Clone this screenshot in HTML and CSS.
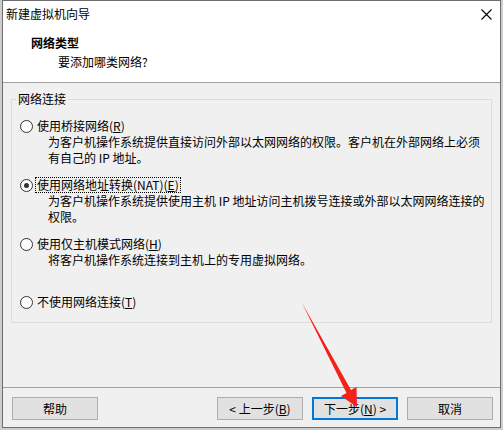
FILE: index.html
```html
<!DOCTYPE html>
<html lang="zh-CN">
<head>
<meta charset="utf-8">
<title>新建虚拟机向导</title>
<link rel="stylesheet" href="styles.css">
</head>
<body>
<div class="window">
  <div class="header">
    <div class="titlebar">
      <span class="title">新建虚拟机向导</span>
      <svg class="close" width="11" height="11" viewBox="0 0 11 11"><path d="M0.5 0.5 L10.5 10.5 M10.5 0.5 L0.5 10.5" stroke="#000" stroke-width="1.1" fill="none"/></svg>
    </div>
    <div class="heading">网络类型</div>
    <div class="subheading">要添加哪类网络?</div>
  </div>
  <div class="body">
    <fieldset class="group">
      <legend class="legend">网络连接</legend>
      <div class="options">
        <div class="option">
          <div class="radio-row"><span class="radio"></span><span class="label">使用桥接网络(<u>R</u>)</span></div>
          <div class="desc">为客户机操作系统提供直接访问外部以太网网络的权限。客户机在外部网络上必须<br>有自己的 IP 地址。</div>
        </div>
        <div class="option">
          <div class="radio-row"><span class="radio checked"></span><span class="label focus">使用网络地址转换(NAT)(<u>E</u>)</span></div>
          <div class="desc">为客户机操作系统提供使用主机 IP 地址访问主机拨号连接或外部以太网网络连接的<br>权限。</div>
        </div>
        <div class="option">
          <div class="radio-row"><span class="radio"></span><span class="label">使用仅主机模式网络(<u>H</u>)</span></div>
          <div class="desc">将客户机操作系统连接到主机上的专用虚拟网络。</div>
        </div>
        <div class="option last">
          <div class="radio-row"><span class="radio"></span><span class="label">不使用网络连接(<u>T</u>)</span></div>
        </div>
      </div>
    </fieldset>
    <div class="footer">
      <button class="btn">帮助</button>
      <div class="spacer"></div>
      <button class="btn">&lt; 上一步(<u>B</u>)</button>
      <button class="btn default">下一步(<u>N</u>) &gt;</button>
      <button class="btn">取消</button>
    </div>
  </div>
</div>
<svg class="arrow" width="503" height="430" viewBox="0 0 503 430">
  <polygon points="302,303 351,390 356.5,387 357,407 341,396 346.5,393" fill="#f3211a"/>
</svg>
</body>
</html>
```
FILE: styles.css
```css
html, body {
  margin: 0;
  padding: 0;
}
body {
  width: 503px;
  height: 430px;
  background: #cdcdcd;
  font-family: "Noto Sans CJK SC", "Noto Sans", sans-serif;
  font-size: 12px;
  color: #000;
  overflow: hidden;
  position: relative;
}
.window {
  margin-left: 2px;
  width: 499px;
  height: 428px;
  box-sizing: border-box;
  border: 1px solid #6e6e6e;
  background: #f0f0f0;
  display: flex;
  flex-direction: column;
}
.header {
  background: #fff;
  height: 81px;
  border-bottom: 1px solid #a0a0a0;
  box-sizing: content-box;
}
.titlebar {
  height: 26px;
  display: flex;
  align-items: center;
  justify-content: space-between;
  padding-left: 3px;
  padding-right: 8px;
}
.title {
  line-height: 16px;
}
.close {
  display: block;
  margin-top: 1px;
}
.heading {
  font-weight: bold;
  line-height: 16px;
  margin-top: 8px;
  padding-left: 28px;
}
.subheading {
  line-height: 16px;
  margin-top: 3px;
  padding-left: 55px;
}
.body {
  flex: 1;
  display: flex;
  flex-direction: column;
}
.group {
  margin: 8px 8px 0 8px;
  padding: 0;
  border: 1px solid #dcdcdc;
  min-width: 0;
}
.legend {
  margin-left: 4px;
  padding: 0 2px;
  line-height: 16px;
}
.options {
  padding: 11px 0 12px 8px;
}
.option {
  margin-bottom: 11px;
}
.option.last {
  margin-top: 26px;
  margin-bottom: 0;
}
.radio-row {
  display: flex;
  align-items: center;
  height: 16px;
}
.radio {
  width: 13px;
  height: 13px;
  box-sizing: border-box;
  border: 1px solid #333;
  border-radius: 50%;
  background: #fff;
  display: flex;
  align-items: center;
  justify-content: center;
  flex: none;
}
.radio.checked::after {
  content: "";
  width: 5px;
  height: 5px;
  border-radius: 50%;
  background: #333;
}
.label {
  margin-left: 2px;
  padding: 0 1px;
  line-height: 14px;
  border: 1px solid transparent;
}
.label.focus {
  border: 1px dotted #000;
}
.desc {
  padding-left: 28px;
  line-height: 16px;
}
.footer {
  margin-top: auto;
  border-top: 1px solid #a0a0a0;
  display: flex;
  align-items: center;
  padding: 9px 7px 7px 9px;
}
.spacer {
  flex: 1;
}
.btn {
  width: 86px;
  height: 23px;
  box-sizing: border-box;
  background: #e1e1e1;
  border: 1px solid #adadad;
  font-family: inherit;
  font-size: 12px;
  color: #000;
  padding: 0;
  margin: 0;
  line-height: 16px;
}
.btn + .btn {
  margin-left: 9px;
}
.btn.default {
  border: 2px solid #0078d7;
}
.arrow {
  position: absolute;
  left: 0;
  top: 0;
  pointer-events: none;
}
```
